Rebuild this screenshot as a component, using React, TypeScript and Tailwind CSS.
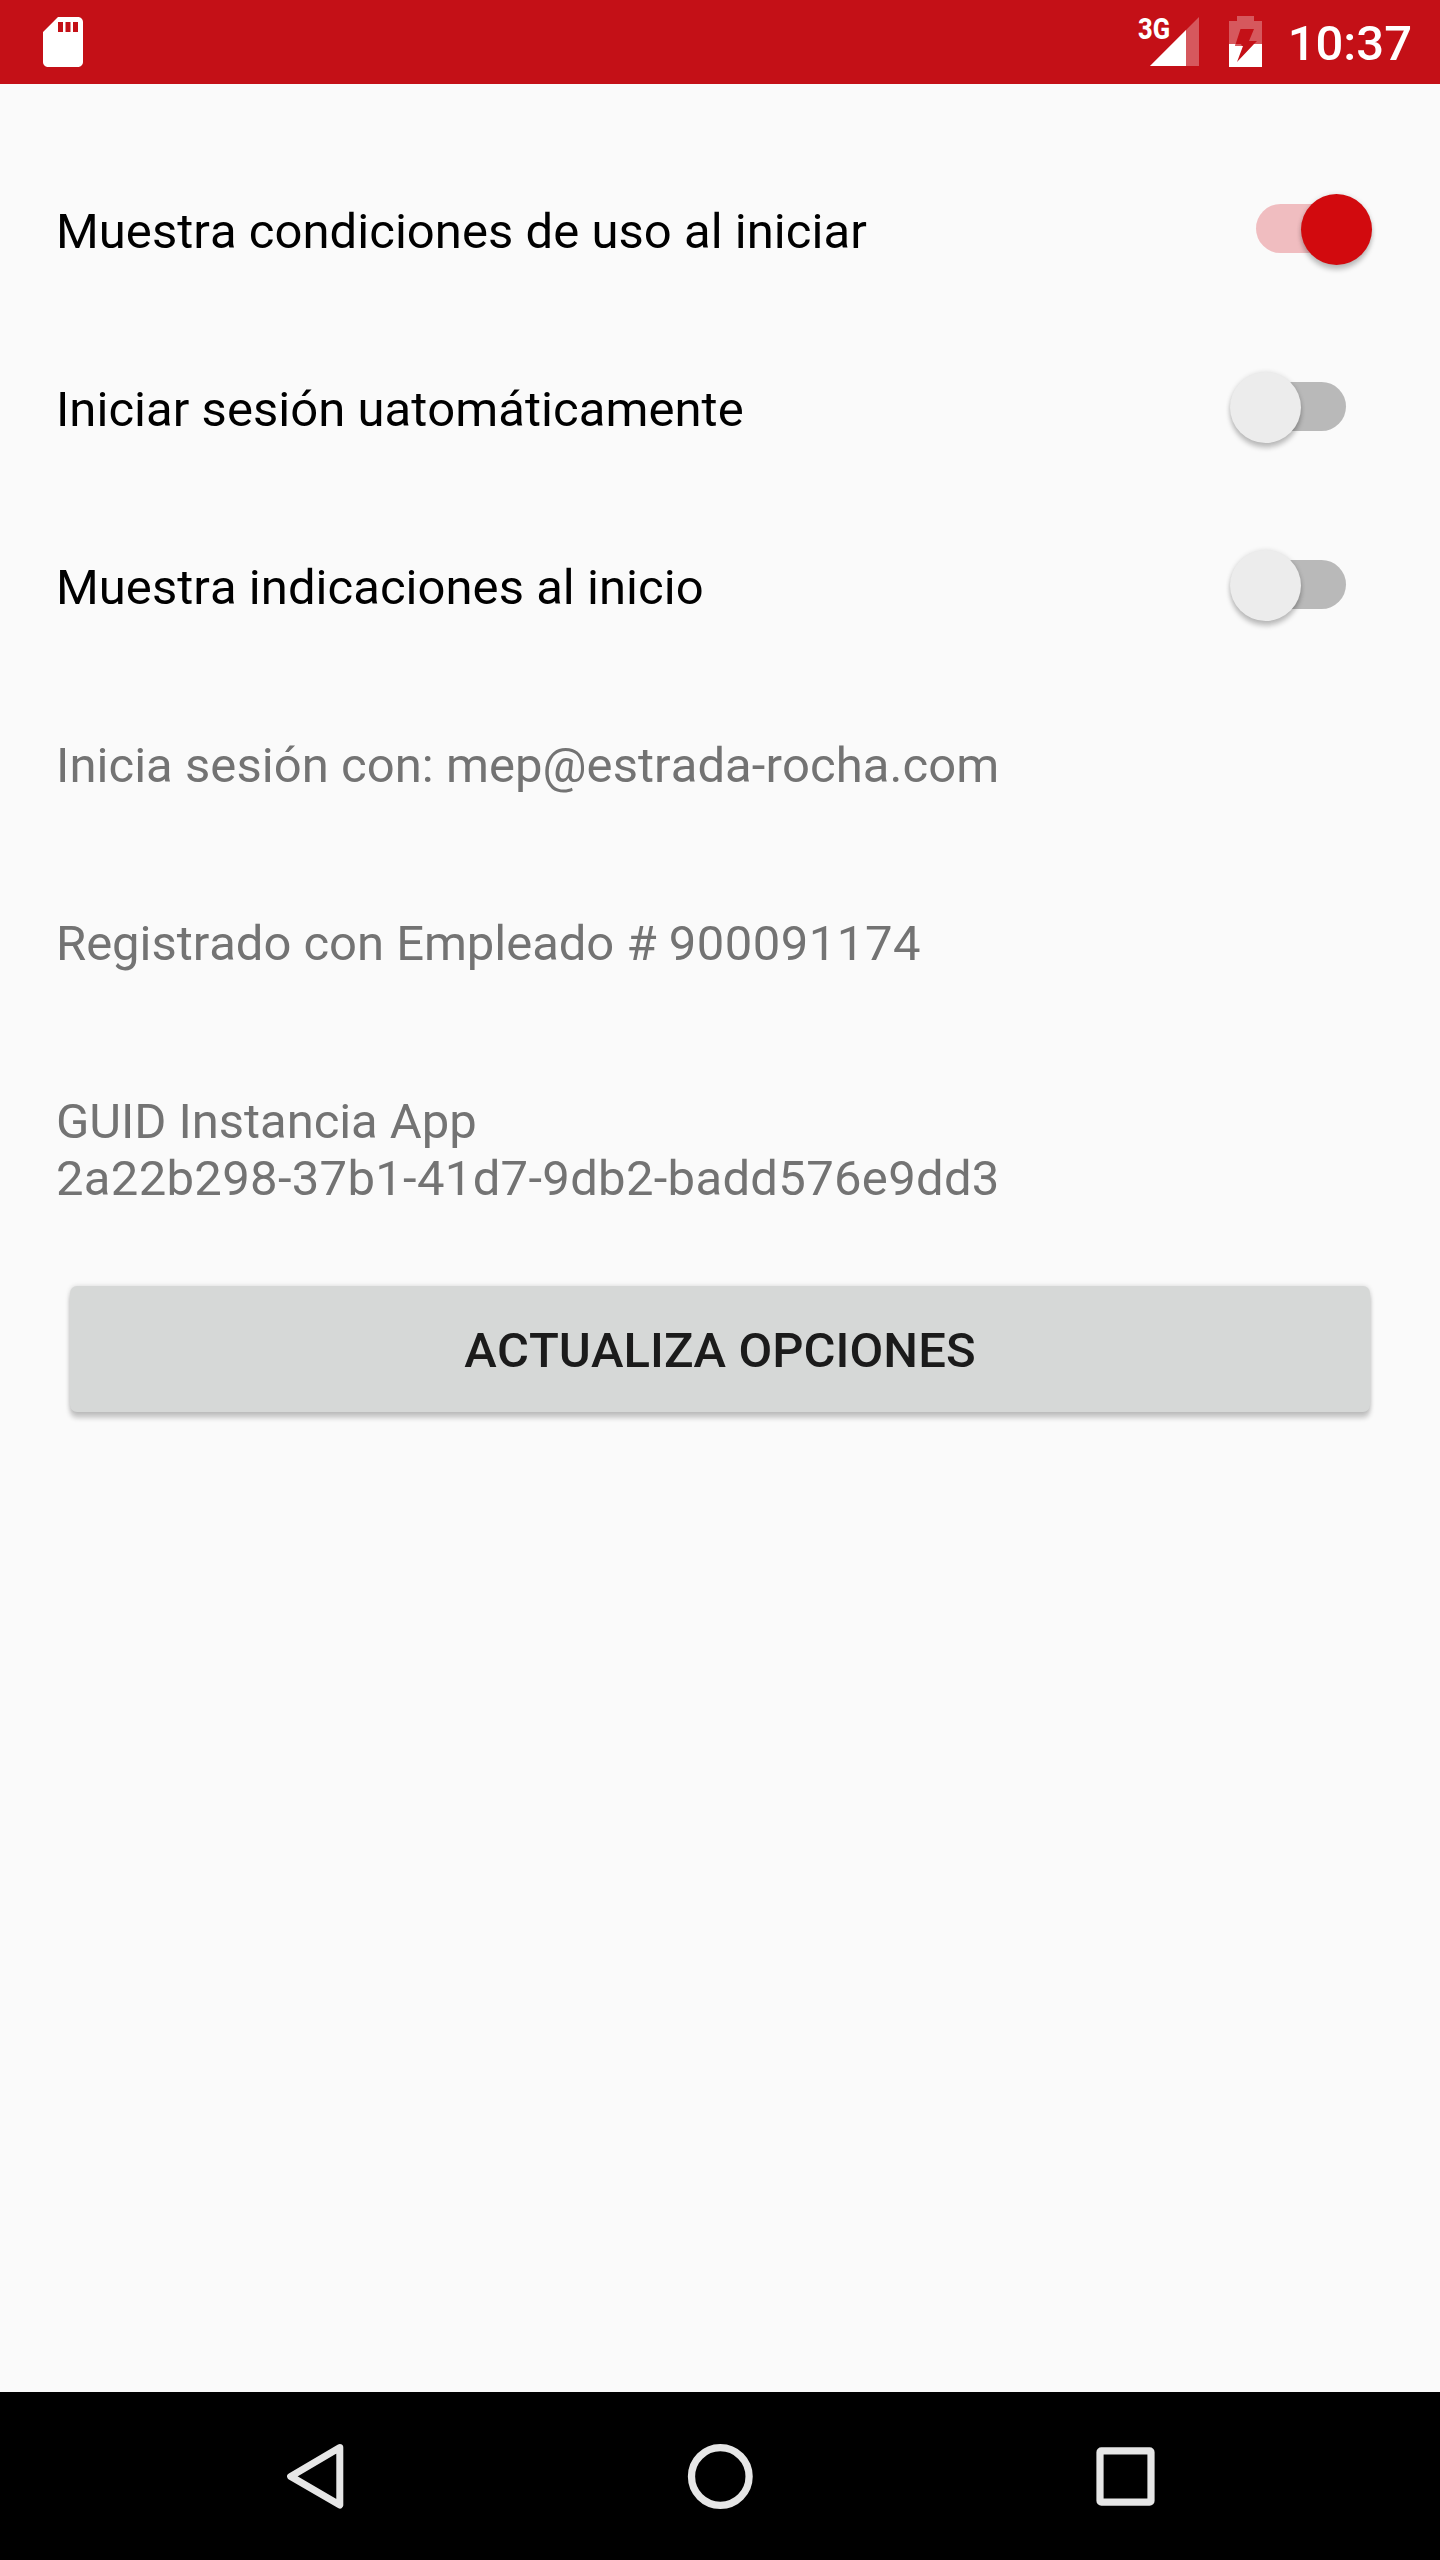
import { useState } from "react"
import clsx from "clsx"

interface Option {
  id: number
  label: string
  checked: boolean
}

function StatusBar() {
  return (
    <header className="flex h-[84px] items-start justify-between bg-[#c41017] pl-[33px] pr-7 text-white">
      {/* SD card */}
      <svg viewBox="0 0 24 24" className="mt-3 h-[60px] w-[60px]" fill="currentColor">
        <path d="M18 2h-8L4 8v12c0 1.1.9 2 2 2h12c1.1 0 2-.9 2-2V4c0-1.1-.9-2-2-2zm-6 6h-2V4h2v4zm3 0h-2V4h2v4zm3 0h-2V4h2v4z" />
      </svg>

      <div className="flex items-start">
        {/* Signal */}
        <svg width="64" height="84" viewBox="0 0 64 84" fill="currentColor">
          <text x="3" y="39" fontSize="29" fontWeight="800" fontFamily="Roboto, sans-serif" textLength="32" lengthAdjust="spacingAndGlyphs">
            3G
          </text>
          <path d="M15 66L64 17V66Z" opacity="0.3" />
          <path d="M15 66L51 30V66Z" />
        </svg>

        {/* Battery */}
        <svg width="33" height="84" viewBox="0 0 33 84" className="ml-[30px]" fill="currentColor">
          <path d="M8 16H25V21H33V44H25L28 41H20L25 29H11.5L6 46H13L12 44H0V21H8Z" opacity="0.3" />
          <path d="M0 44H6.5L6 46H14L8 62L25 44H33V67H0Z" />
        </svg>

        <span className="ml-[25px] mt-[15px] w-[125px] text-right text-[49px] font-medium leading-[57px]">10:37</span>
      </div>
    </header>
  )
}

function Toggle({ checked, onClick }: { checked: boolean; onClick: () => void }) {
  return (
    <button
      role="switch"
      aria-checked={checked}
      onClick={onClick}
      className={clsx("relative mr-3 flex h-[70px] w-[142px] items-start", checked ? "justify-end" : "justify-start")}
    >
      <span
        className={clsx(
          "absolute left-[26px] top-[10px] h-[49px] w-[90px] rounded-full",
          checked ? "bg-[#f0bdc0]" : "bg-[#b9b9b9]",
        )}
      />
      <span
        className={clsx(
          "relative h-[71px] w-[71px] rounded-full shadow-[0_5px_5px_rgba(0,0,0,0.22),0_0_5px_rgba(0,0,0,0.12)]",
          checked ? "bg-[#d20a0e]" : "bg-[#ececec]",
        )}
      />
    </button>
  )
}

function NavigationBar() {
  return (
    <nav className="flex h-[168px] items-center justify-center gap-[340px] bg-black text-[#e6e6e6]">
      <button aria-label="Back">
        <svg width="66" height="66" viewBox="0 0 66 66" fill="none" stroke="currentColor" strokeWidth="7" strokeLinejoin="round">
          <path d="M58.8 4.6L9.6 33.4L58.8 62Z" />
        </svg>
      </button>
      <button aria-label="Home">
        <svg width="66" height="66" viewBox="0 0 66 66" fill="none" stroke="currentColor" strokeWidth="7.3">
          <circle cx="33.3" cy="33.5" r="28.8" />
        </svg>
      </button>
      <button aria-label="Recents">
        <svg width="66" height="66" viewBox="0 0 66 66" fill="currentColor" fillRule="evenodd">
          <path d="M8.4 4.3H56.6A5 5 0 0 1 61.6 9.3V57.7A5 5 0 0 1 56.6 62.7H8.4A5 5 0 0 1 3.4 57.7V9.3A5 5 0 0 1 8.4 4.3ZM10.6 11.6V55.4H54.4V11.6Z" />
        </svg>
      </button>
    </nav>
  )
}

export default function App() {
  const [options, setOptions] = useState<Option[]>([
    { id: 1, label: "Muestra condiciones de uso al iniciar", checked: true },
    { id: 2, label: "Iniciar sesión uatomáticamente", checked: false },
    { id: 3, label: "Muestra indicaciones al inicio", checked: false },
  ])

  const toggleOption = (id: number) => {
    setOptions(options.map((option) => (option.id === id ? { ...option, checked: !option.checked } : option)))
  }

  return (
    <div className="flex h-[2560px] w-[1440px] flex-col bg-[#fafafa] font-[Roboto,sans-serif]">
      <StatusBar />

      <main className="flex flex-1 flex-col px-14 pt-14 text-[49px] leading-[57px] [font-kerning:none]">
        {/* Options */}
        {options.map((option) => (
          <div key={option.id} className="flex h-[178px] items-center justify-between text-black">
            <span className="pt-[5px] tracking-[0.04px]">{option.label}</span>
            <Toggle checked={option.checked} onClick={() => toggleOption(option.id)} />
          </div>
        ))}

        {/* Account details */}
        <p className="flex h-[178px] items-center pt-[5px] tracking-[0.05px] text-[#737373]">
          Inicia sesión con: mep@estrada-rocha.com
        </p>
        <p className="h-[178px] pt-[63px] tracking-[-0.04px] text-[#737373]">
          Registrado con Empleado # <span className="tracking-[0.5px]">900091174</span>
        </p>
        <p className="pt-[63px] text-[#737373]">
          <span className="tracking-[-0.05px]">GUID Instancia App</span>
          <br />
          <span className="tracking-[0.31px]">2a22b298-37b1-41d7-9db2-badd576e9dd3</span>
        </p>

        <button className="mx-[14px] mt-[79px] h-[126px] rounded-[7px] bg-[#d6d8d7] pt-[2px] font-medium tracking-[0.06px] text-[#1b1b1b] shadow-[0_6px_5px_rgba(0,0,0,0.2),0_0_5px_rgba(0,0,0,0.14)]">
          ACTUALIZA OPCIONES
        </button>
      </main>

      <NavigationBar />
    </div>
  )
}
